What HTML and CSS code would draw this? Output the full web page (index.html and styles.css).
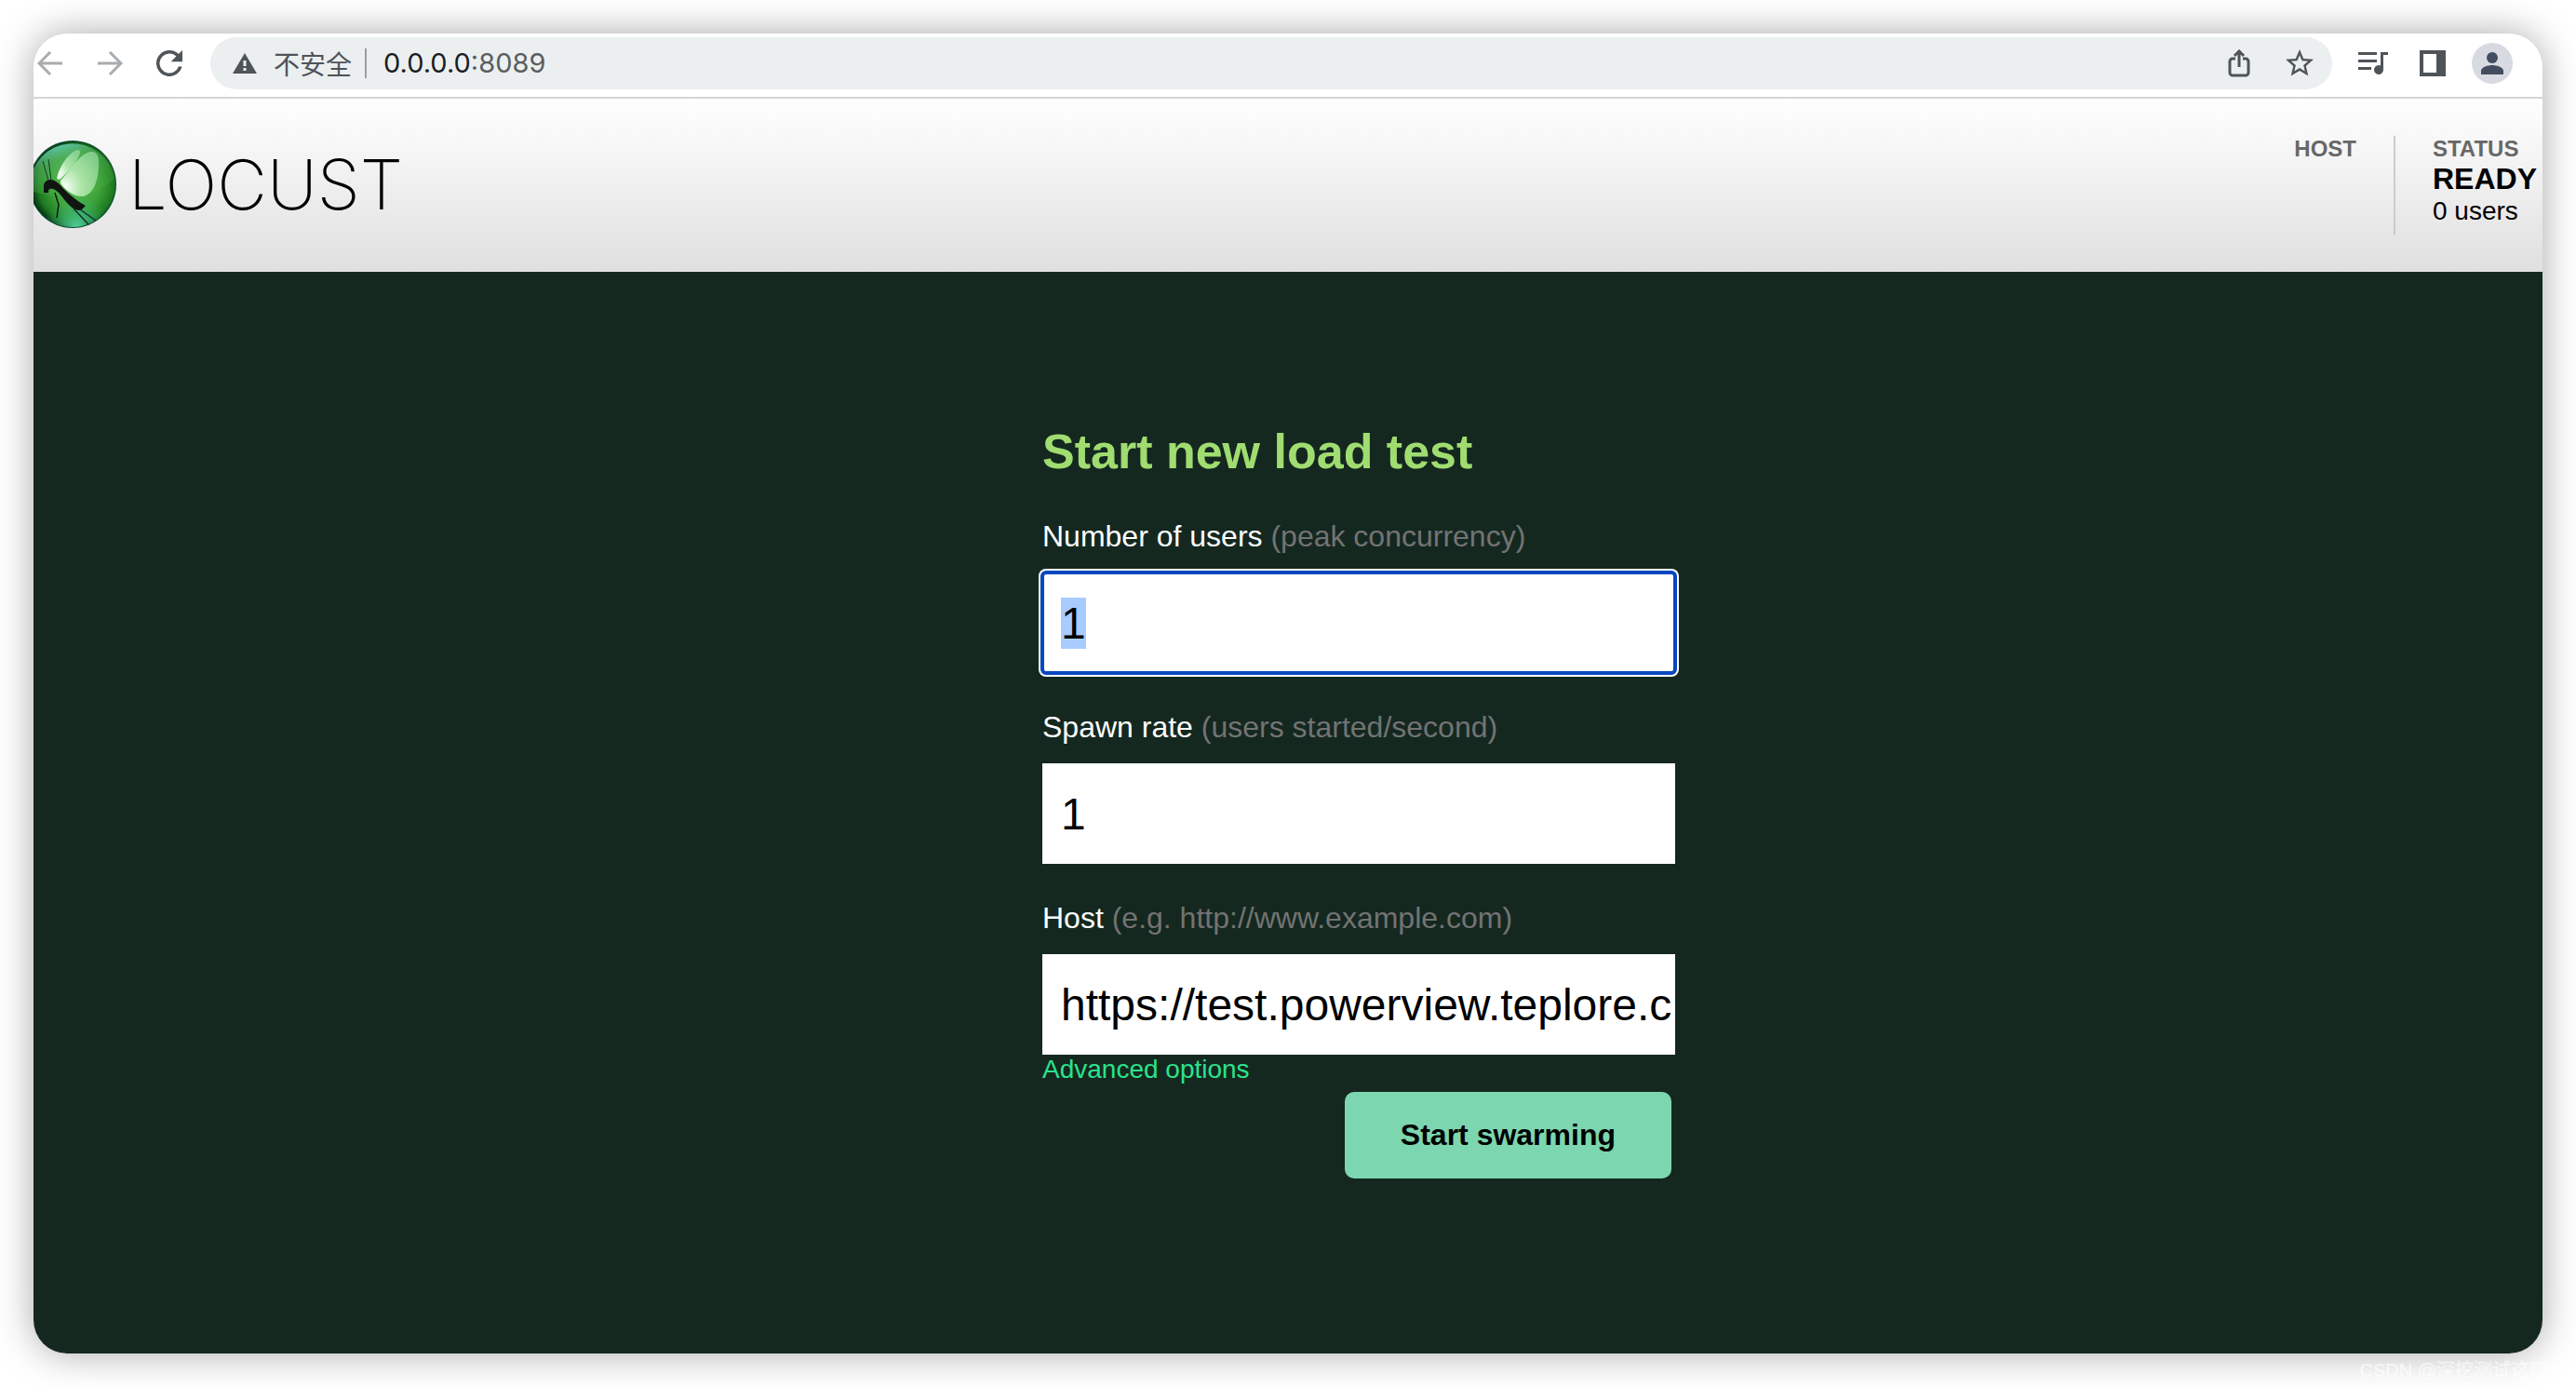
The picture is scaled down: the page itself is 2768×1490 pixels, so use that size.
FILE: index.html
```html
<!DOCTYPE html>
<html lang="en">
<head>
<meta charset="utf-8">
<title>Locust</title>
<link rel="stylesheet" href="styles.css">
</head>
<body>
<div class="window">
  <nav class="toolbar" aria-label="Browser">
    <div class="nav-buttons">
      <button class="icon-button faded" aria-label="Back"><svg width="28" height="28" viewBox="0 0 28 28"><path d="M27 14H2M14 2L2 14l12 12" fill="none" stroke="currentColor" stroke-width="3"/></svg></button>
      <button class="icon-button faded" aria-label="Forward"><svg width="28" height="28" viewBox="0 0 28 28"><path d="M1 14h25M14 2l12 12-12 12" fill="none" stroke="currentColor" stroke-width="3"/></svg></button>
      <button class="icon-button" aria-label="Reload"><svg width="28" height="28" viewBox="4 4 16 16"><path fill="currentColor" d="M17.650 6.350A7.960 7.960 0 0 0 12 4a8 8 0 1 0 7.730 10h-2.080A6 6 0 1 1 12 6c1.660 0 3.140.69 4.220 1.780L13 11h7V4z"/></svg></button>
    </div>
    <div class="omnibox">
      <svg width="26" height="22" viewBox="0 0 26 22"><path fill="currentColor" fill-rule="evenodd" d="M13 0L26 22H0zM11.500 8v6h3V8zm0 8v3h3v-3z"/></svg>
      <span class="security">不安全</span>
      <span class="separator"></span>
      <span class="url"><b>0.0.0.0</b>:8089</span>
      <span class="omnibox-actions">
        <button class="icon-button" aria-label="Share"><svg width="24" height="30" viewBox="0 0 24 30"><path d="M8 10H5a3 3 0 0 0-3 3v12a3 3 0 0 0 3 3h14a3 3 0 0 0 3-3V13a3 3 0 0 0-3-3h-3M12 19V3M7 7l5-5 5 5" fill="none" stroke="currentColor" stroke-width="3"/></svg></button>
        <button class="icon-button" aria-label="Bookmark"><svg width="30" height="30" viewBox="2 2 20 20"><path fill="currentColor" d="M22 9.240l-7.190-.62L12 2 9.190 8.630 2 9.240l5.460 4.730L5.820 21 12 17.270 18.180 21l-1.630-7.030L22 9.240zM12 15.400l-3.760 2.270 1-4.280-3.320-2.880 4.380-.38L12 6.100l1.710 4.040 4.380.38-3.320 2.880 1 4.280L12 15.400z"/></svg></button>
      </span>
    </div>
    <div class="toolbar-actions">
      <button class="icon-button" aria-label="Media"><svg width="32" height="24" viewBox="0 0 32 24"><path fill="currentColor" d="M0 0h20v3H0zM0 8h20v3H0zM0 16h14v3H0zM24 0h8v3h-5v16a5 5 0 1 1-3-4.600z"/></svg></button>
      <button class="icon-button" aria-label="Side panel"><svg width="28" height="28" viewBox="0 0 28 28"><path fill="currentColor" fill-rule="evenodd" d="M0 0h28v28H0zM4 4v20h14V4z"/></svg></button>
      <button class="icon-button avatar" aria-label="Profile"><svg width="24" height="24" viewBox="0 0 24 24"><circle cx="12" cy="6" r="6" fill="currentColor"/><path fill="currentColor" d="M0 24v-4c0-4 8-6 12-6s12 2 12 6v4z"/></svg></button>
    </div>
  </nav>

  <header class="header">
    <a class="logo" href="#" aria-label="Locust">
      <svg class="logo-mark" width="94" height="94" viewBox="0 0 94 94">
        <defs>
          <radialGradient id="ball" cx="54%" cy="50%" r="52%">
            <stop offset="0" stop-color="#5cc052"/><stop offset=".55" stop-color="#3da238"/><stop offset=".85" stop-color="#1d7a20"/><stop offset="1" stop-color="#093a16"/>
          </radialGradient>
          <linearGradient id="sky" x1=".1" y1="0" x2=".5" y2=".8">
            <stop offset="0" stop-color="#6fe0e8"/><stop offset=".45" stop-color="#62c070" stop-opacity=".55"/><stop offset="1" stop-color="#58b850" stop-opacity=".2"/>
          </linearGradient>
          <radialGradient id="base" cx="55%" cy="100%" r="38%">
            <stop offset="0" stop-color="#4fd0a0"/><stop offset="1" stop-color="#3cb870" stop-opacity="0"/>
          </radialGradient>
          <radialGradient id="wing" cx="10%" cy="80%" r="100%">
            <stop offset="0" stop-color="#fff"/><stop offset=".45" stop-color="#c4f0c0" stop-opacity=".8"/><stop offset="1" stop-color="#a4e4ac" stop-opacity=".65"/>
          </radialGradient>
        </defs>
        <circle cx="47" cy="47" r="47" fill="#0d4b33"/>
        <circle cx="47" cy="47" r="46" fill="url(#ball)"/>
        <circle cx="47" cy="47" r="46" fill="url(#base)"/>
        <path fill="url(#sky)" d="M1 47a46 46 0 0 1 91-7C78 56 52 62 30 59 17 58 8 56 2 54z"/>
        <path fill="url(#wing)" d="M30 41C33 27 43 13 52 10c3 0 4 2 2 6-5 11-13 19-21 26z"/>
        <path fill="url(#wing)" d="M34 43C45 32 53 15 66 12c8-1 10 6 9 17-1 16-6 28-16 31-10 1-19-6-25-14z"/>
        <path fill="#101512" d="M16 56v-7c0-4 3-7 7-7 4 0 6 2 9 4 4 4 6 7 12 12 6 5 11 9 17 12l-2 2-3 3c-5 0-9-2-12-5-4-4-7-8-11-13-4-4-7-6-10-5-2 0-2 2-2 4z"/>
        <path fill="none" stroke="#101512" stroke-width="1.500" d="M28 56l4 13-2 14"/>
        <path fill="none" stroke="#143a2c" stroke-width="1" d="M15 22l6 21M21 20l3 23"/>
        <path fill="none" stroke="#132b38" stroke-width="1.500" d="M48 73l16 17M55 74l17 12"/>
      </svg>
      <span class="logo-name">LOCUST</span>
    </a>
    <div class="stats">
      <div class="stat">
        <span class="stat-title">HOST</span>
      </div>
      <div class="stat">
        <span class="stat-title">STATUS</span>
        <strong class="stat-value">READY</strong>
        <span class="stat-note">0 users</span>
      </div>
    </div>
  </header>

  <main class="main">
    <form class="form">
      <h1 class="form-title">Start new load test</h1>
      <div class="field">
        <label for="users">Number of users <span class="hint">(peak concurrency)</span></label>
        <input class="active" id="users" type="text" inputmode="numeric" value="1">
      </div>
      <div class="field">
        <label for="rate">Spawn rate <span class="hint">(users started/second)</span></label>
        <input id="rate" type="text" inputmode="numeric" value="1">
      </div>
      <div class="field">
        <label for="host">Host <span class="hint">(e.g. http://www.example.com)</span></label>
        <input id="host" type="text" value="https://test.powerview.teplore.c">
      </div>
      <a class="advanced" href="#">Advanced options</a>
      <button class="submit" type="button">Start swarming</button>
    </form>
  </main>
</div>
<div class="watermark">CSDN @深挖测试这口井</div>
<script src="app.js"></script>
</body>
</html>
```
FILE: app.js
```js
// Put the caret in the first field with its value selected.
const users = document.getElementById("users");
users.focus();
users.select();
```
FILE: styles.css
```css
* { box-sizing: border-box; }

body {
  margin: 0;
  min-height: 100vh;
  padding: 36px;
  display: flex;
  position: relative;
  background: #fff;
  color: #000;
  font-family: "Liberation Sans", Arial, "Noto Sans CJK SC", sans-serif;
}

.window {
  flex: 1;
  min-width: 0;
  display: flex;
  flex-direction: column;
  overflow: hidden;
  border-radius: 36px;
  background: #fff;
  box-shadow: 0 0 40px rgba(0, 0, 0, .34);
}

/* Browser toolbar */
.toolbar {
  display: flex;
  align-items: center;
  padding: 4px 32px 8px 4px;
  border-bottom: 2px solid #d3d5d5;
  color: #4f5459;
}
.icon-button {
  display: flex;
  align-items: center;
  justify-content: center;
  padding: 0;
  border: 0;
  background: none;
  color: inherit;
}
.faded { color: #a9acaf; }
.nav-buttons { display: flex; gap: 36px; margin-right: 30px; }
.omnibox {
  flex: 1;
  display: flex;
  align-items: center;
  height: 56px;
  padding: 0 20px 0 24px;
  border-radius: 28px;
  background: #ebeff0;
}
.security {
  margin-left: 18px;
  font: 28px/40px "Noto Sans CJK SC", sans-serif;
}
.separator { width: 2px; height: 32px; margin: 0 18px 0 14px; background: #9a9da0; }
.url { font: 29px/40px Inter, sans-serif; color: #5a5d60; }
.url b { font-weight: 400; color: #1c1d1f; }
.omnibox-actions { display: flex; align-items: center; gap: 38px; margin-left: auto; }
.toolbar-actions { display: flex; align-items: center; margin-left: 28px; }
.toolbar-actions .icon-button { margin-right: 34px; }
.toolbar-actions .avatar {
  width: 44px;
  height: 44px;
  margin: 0 0 0 -6px;
  border-radius: 50%;
  background: #d7dae0;
  color: #434d60;
}

/* Page header */
.header {
  display: flex;
  justify-content: space-between;
  align-items: flex-start;
  padding: 40px 6px 40px 0;
  background: linear-gradient(#fff, #dfdfdf);
}
.logo {
  display: flex;
  align-items: center;
  margin: 5px 0 0 -5px;
  color: #000;
  text-decoration: none;
}
.logo-name {
  margin-left: 13px;
  font: 200 74px/94px Inter, sans-serif;
}
.stats { display: flex; }
.stat {
  display: flex;
  flex-direction: column;
  height: 106px;
}
.stat + .stat {
  margin-left: 40px;
  padding-left: 40px;
  border-left: 2px solid #ccc;
}
.stat-title { font: bold 24px/28px "Liberation Sans", Arial, sans-serif; color: #676767; }
.stat-value { font-size: 32px; line-height: 36px; }
.stat-note { font-size: 28px; line-height: 34px; }

/* Start form */
.main {
  flex: 1;
  display: flex;
  justify-content: center;
  align-items: flex-start;
  padding: 163px 0 0 152px;
  background: #142820;
}
.form {
  width: 680px;
  display: flex;
  flex-direction: column;
}
.form-title {
  margin: 0 0 43px;
  font-size: 52px;
  line-height: 60px;
  color: #a0dc70;
}
.field { display: flex; flex-direction: column; gap: 21px; }
.field + .field { margin-top: 40px; }
.field label { font-size: 32px; line-height: 36px; color: #fff; }
.field .hint { color: #737373; }
.field input {
  height: 108px;
  padding: 0 0 0 20px;
  border: 0;
  border-radius: 0;
  background: #fff;
  color: #000;
  font: 48px "Liberation Sans", Arial, sans-serif;
  outline: 0;
}
.field input.active {
  border-radius: 4px;
  outline: 4px solid #0747c0;
  outline-offset: -2px;
  box-shadow: 0 0 0 4px #fff;
}
.field input::selection { background: #a8ccff; color: #000; }
.advanced {
  align-self: flex-start;
  font-size: 28px;
  line-height: 32px;
  color: #2ce28c;
  text-decoration: none;
}
.submit {
  align-self: flex-end;
  margin: 8px 4px 0 0;
  padding: 28px 60px;
  border: 0;
  border-radius: 10px;
  background: #7cd6af;
  color: #000;
  font: bold 32px/37px "Liberation Sans", Arial, sans-serif;
}

.watermark {
  position: absolute;
  right: 10px;
  bottom: 6px;
  font: 20px/24px "Liberation Sans", "Noto Sans CJK SC", sans-serif;
  color: rgba(255, 255, 255, .7);
}
```
